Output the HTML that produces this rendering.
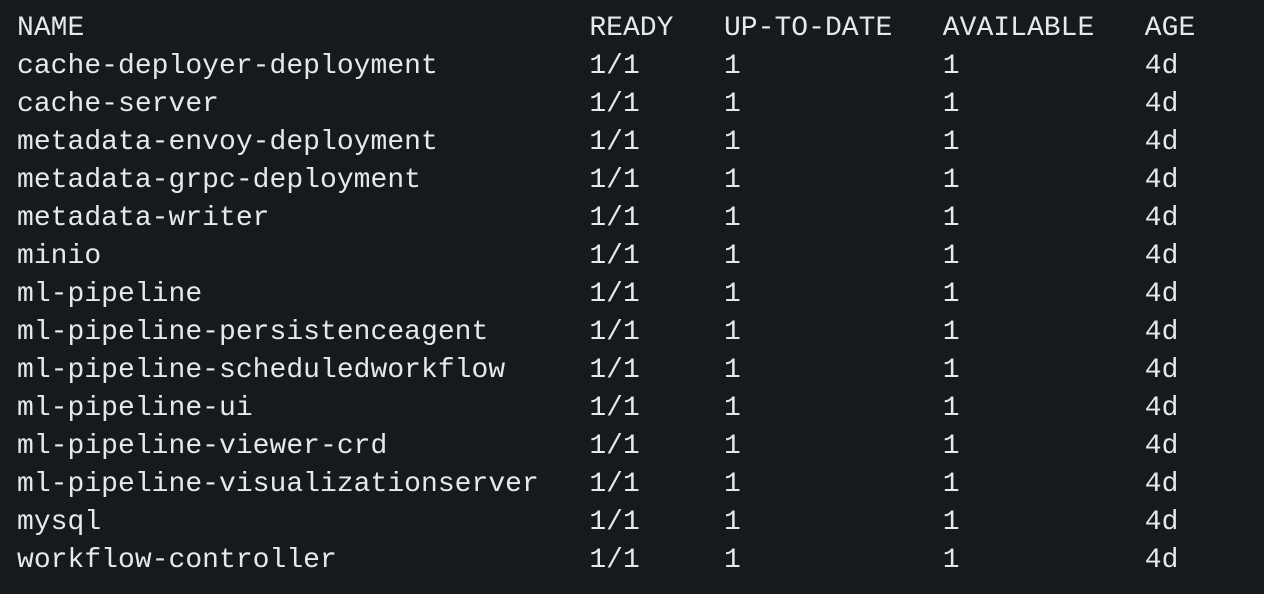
<!DOCTYPE html>
<html><head><meta charset="utf-8"><style>
html,body{margin:0;padding:0;background:#16191e;width:1264px;height:594px;overflow:hidden}
pre{margin:0;position:absolute;left:17px;top:10px;font-family:"Liberation Mono",monospace;font-size:28px;line-height:38px;color:#e6e8ec;letter-spacing:0.03px}
</style></head><body>
<pre>NAME                              READY   UP-TO-DATE   AVAILABLE   AGE
cache-deployer-deployment         1/1     1            1           4d
cache-server                      1/1     1            1           4d
metadata-envoy-deployment         1/1     1            1           4d
metadata-grpc-deployment          1/1     1            1           4d
metadata-writer                   1/1     1            1           4d
minio                             1/1     1            1           4d
ml-pipeline                       1/1     1            1           4d
ml-pipeline-persistenceagent      1/1     1            1           4d
ml-pipeline-scheduledworkflow     1/1     1            1           4d
ml-pipeline-ui                    1/1     1            1           4d
ml-pipeline-viewer-crd            1/1     1            1           4d
ml-pipeline-visualizationserver   1/1     1            1           4d
mysql                             1/1     1            1           4d
workflow-controller               1/1     1            1           4d</pre>
</body></html>
